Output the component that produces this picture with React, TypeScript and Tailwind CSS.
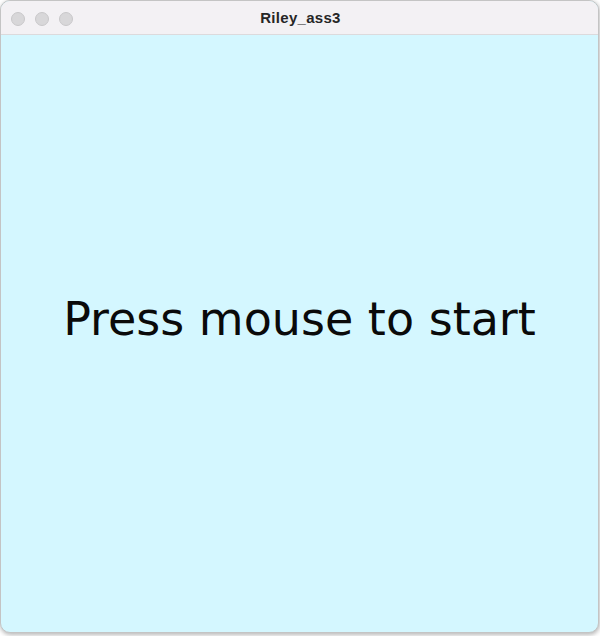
export default function App() {
  return (
    <div className="w-[600px] h-[636px] bg-white relative overflow-hidden" style={{ fontFamily: '"DejaVu Sans", sans-serif' }}>
      <div className="absolute left-0 top-[1px] w-[600px] h-[634px] rounded-[11px] bg-[#b9b9b9] blur-[2px]" />
      <div className="relative w-[599px] h-[633px] rounded-[10px] border border-[#c4c4c4] bg-[#d4f7ff] overflow-hidden flex flex-col">
        <div className="h-[34px] bg-[#f3f1f4] border-b border-[#dcdadc] flex items-center relative shrink-0">
          <div className="flex gap-[10px] pl-[10px] pt-[2px]">
            <div className="w-[14px] h-[14px] rounded-full bg-[#d8d7d9] border border-[#c9c8ca]" />
            <div className="w-[14px] h-[14px] rounded-full bg-[#d8d7d9] border border-[#c9c8ca]" />
            <div className="w-[14px] h-[14px] rounded-full bg-[#d8d7d9] border border-[#c9c8ca]" />
          </div>
          <div className="absolute inset-0 flex items-center justify-center pt-[2px] pl-[2px] text-[15px] font-bold text-[#262626] tracking-[0.3px]" style={{ fontFamily: '"Liberation Sans", Arial, sans-serif' }}>
            Riley_ass3
          </div>
        </div>
        <div className="flex-1 flex justify-center pt-[261px]">
          <div className="text-[46px] text-[#0a0a0a] leading-none h-[46px] whitespace-nowrap">Press mouse to start</div>
        </div>
      </div>
    </div>
  );
}
